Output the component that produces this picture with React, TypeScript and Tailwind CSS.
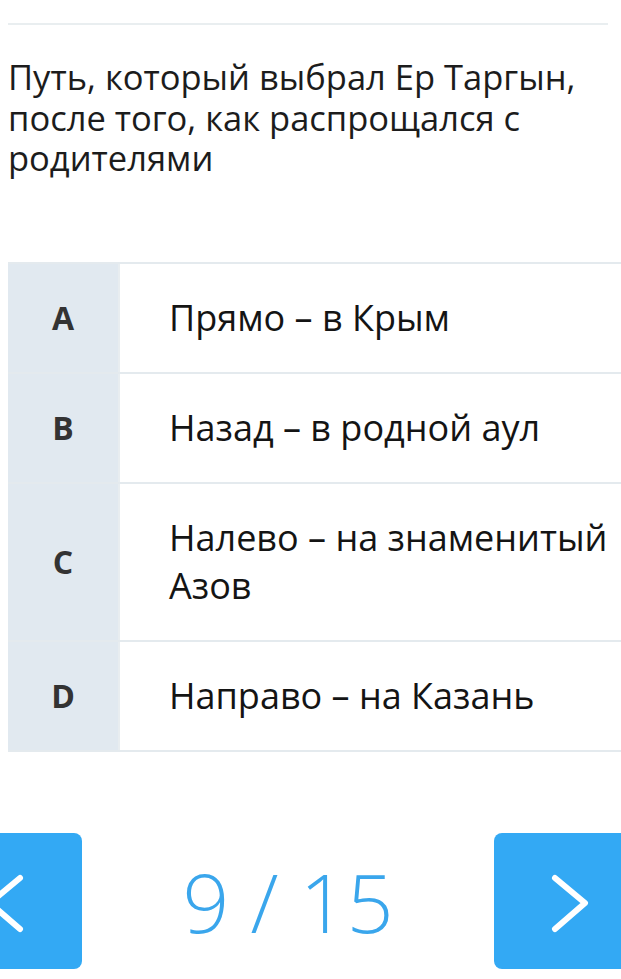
import React from "react";

const rows = [
  { k: "A", t: "Прямо – в Крым" },
  { k: "B", t: "Назад – в родной аул" },
  { k: "C", t: "Налево – на знаменитый Азов" },
  { k: "D", t: "Направо – на Казань" },
];

export default function App() {
  return (
    <div
      className="relative w-[621px] h-[979px] overflow-hidden bg-white"
      style={{ fontFamily: '"Open Sans", "Noto Sans", sans-serif' }}
    >
      <div className="pt-[23px] pl-[8px]">
        <div className="h-[2px] w-[600px] bg-[#e9eef0]" />
        <p className="mt-[32px] w-[600px] text-[34.5px] leading-[40.5px] text-[#1c1c1c]">
          Путь, который выбрал Ер Таргын, после того, как распрощался с родителями
        </p>
      </div>

      <div className="ml-[8px] mt-[83px] w-[672px] border-t-2 border-[#e4eaee]">
        {rows.map((r) => (
          <div key={r.k} className="flex border-b-2 border-[#e4eaee]">
            <div className="w-[110px] shrink-0 flex items-center justify-center bg-[#e1e9f0] text-[32px] font-bold text-[#333]">
              {r.k}
            </div>
            <div className="flex-1 border-l-2 border-[#e8edf0] pl-[49px] pr-[50px] py-[30px] text-[36px] leading-[48px] text-[#141414]">
              {r.t}
            </div>
          </div>
        ))}
      </div>

      <div className="ml-[-70px] mt-[81px] w-[716px] flex items-center justify-between">
        <div className="w-[152px] h-[136px] rounded-[8px] bg-[#33a9f4] flex items-center">
          <svg width="152" height="136" viewBox="0 0 152 136">
            <polyline
              points="90,45 60,70 90,96"
              fill="none"
              stroke="white"
              strokeWidth="6"
              strokeLinecap="round"
              strokeLinejoin="round"
            />
          </svg>
        </div>
        <div className="text-[82px] leading-none text-[#3aa6ec] font-light">9 / 15</div>
        <div className="w-[152px] h-[136px] rounded-[8px] bg-[#33a9f4] flex items-center">
          <svg width="152" height="136" viewBox="0 0 152 136">
            <polyline
              points="61,45 91,70 61,96"
              fill="none"
              stroke="white"
              strokeWidth="6"
              strokeLinecap="round"
              strokeLinejoin="round"
            />
          </svg>
        </div>
      </div>
    </div>
  );
}
